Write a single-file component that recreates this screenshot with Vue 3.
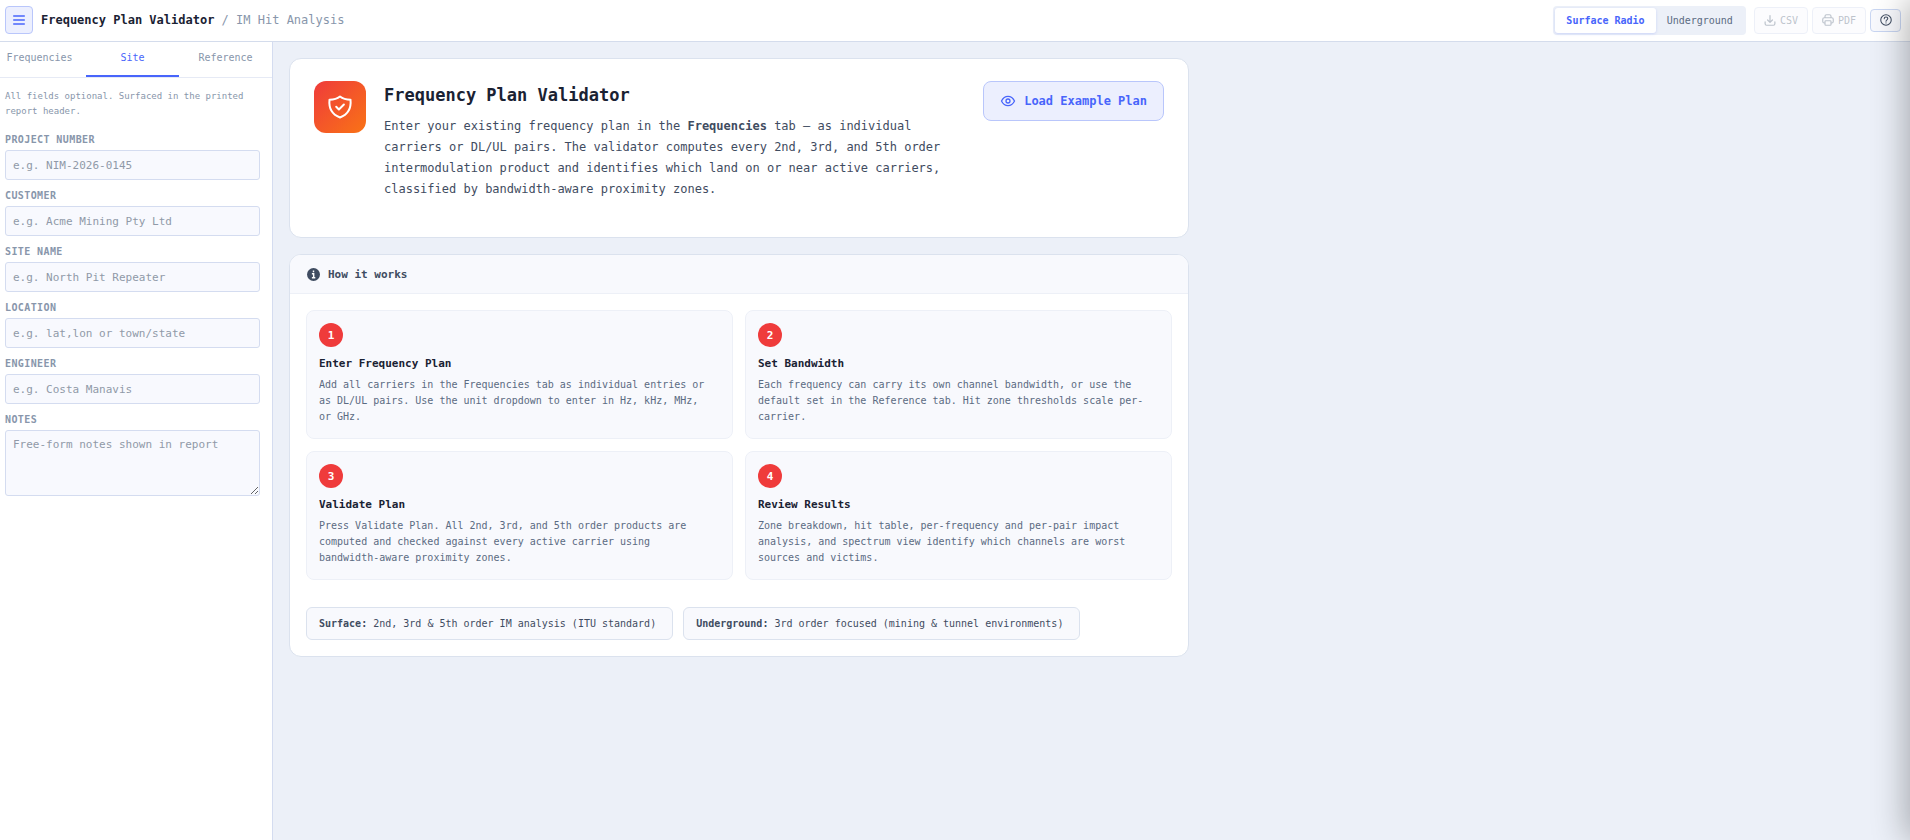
<template>
  <div class="app">
    <header class="topbar">
      <button class="menu-btn" type="button" aria-label="Toggle sidebar" @click="sidebarOpen = !sidebarOpen">
        <svg width="14" height="14" viewBox="0 0 14 14" fill="none" stroke="currentColor" stroke-width="1.6">
          <path d="M1.200 3h11.600M1.200 7h11.600M1.200 11h11.600" />
        </svg>
      </button>
      <div class="brand"><strong>Frequency Plan Validator</strong> / IM Hit Analysis</div>

      <div class="actions">
        <div class="mode-toggle">
          <button
            v-for="m in modes"
            :key="m"
            type="button"
            :class="{ active: mode === m }"
            @click="mode = m"
          >{{ m }}</button>
        </div>
        <div class="exports">
          <button class="export-btn" type="button" disabled>
            <svg width="12" height="12" viewBox="0 0 16 16" fill="none" stroke="currentColor" stroke-width="1.6" stroke-linecap="round" stroke-linejoin="round">
              <path d="M1.500 10.500v2.500a2 2 0 0 0 2 2h9a2 2 0 0 0 2-2v-2.500M8 2v9M4.800 8L8 11.200 11.200 8" />
            </svg>
            CSV
          </button>
          <button class="export-btn" type="button" disabled>
            <svg width="12" height="12" viewBox="0 0 16 16" fill="none" stroke="currentColor" stroke-width="1.5" stroke-linejoin="round">
              <path d="M4 5V3a2 2 0 0 1 2-2h4a2 2 0 0 1 2 2v2M4 12H3a2 2 0 0 1-2-2V7a2 2 0 0 1 2-2h10a2 2 0 0 1 2 2v3a2 2 0 0 1-2 2h-1" />
              <rect x="4" y="9" width="8" height="6" rx="1" />
            </svg>
            PDF
          </button>
          <button class="help-btn" type="button" aria-label="Help" @click="helpOpen = !helpOpen">
            <svg width="12" height="12" viewBox="0 0 16 16" fill="none" stroke="currentColor" stroke-width="1.4" stroke-linecap="round">
              <circle cx="8" cy="8" r="7" />
              <path d="M5.600 6.200C5.600 4.700 6.700 4 8 4s2.400.8 2.400 2.100C10.400 7.700 8 7.800 8 9.600M8 11.800v.2" />
            </svg>
          </button>
        </div>
      </div>
    </header>

    <div class="layout">
      <aside v-show="sidebarOpen" class="sidebar">
        <nav class="tabs">
          <button
            v-for="t in tabs"
            :key="t"
            type="button"
            :class="{ active: tab === t }"
            @click="tab = t"
          >{{ t }}</button>
        </nav>
        <form class="site-form" @submit.prevent>
          <p class="hint">All fields optional. Surfaced in the printed report header.</p>
          <div v-for="f in fields" :key="f.id" class="field">
            <label :for="f.id">{{ f.label }}</label>
            <input :id="f.id" v-model="site[f.id]" type="text" :placeholder="f.placeholder" />
          </div>
          <div class="field">
            <label for="notes">Notes</label>
            <textarea id="notes" v-model="site.notes" placeholder="Free-form notes shown in report"></textarea>
          </div>
        </form>
      </aside>

      <main class="content">
        <section class="card hero">
          <div class="hero-icon">
            <svg width="26" height="26" viewBox="0 0 26 26" fill="none" stroke="#fff" stroke-width="2" stroke-linecap="round" stroke-linejoin="round">
              <path d="M13 2.500c2.800 2.300 6 3.200 10.500 3.200.8 7.800-2 14.600-10.500 17.800C4.500 20.300 1.700 13.500 2.500 5.700 7 5.700 10.200 4.800 13 2.500z" />
              <path d="M9.200 12.800l2.700 2.700 5-5" />
            </svg>
          </div>
          <div class="hero-text">
            <h1>Frequency Plan Validator</h1>
            <p>
              Enter your existing frequency plan in the <strong>Frequencies</strong> tab — as individual
              carriers or DL/UL pairs. The validator computes every 2nd, 3rd, and 5th order intermodulation
              product and identifies which land on or near active carriers, classified by
              bandwidth-aware proximity zones.
            </p>
          </div>
          <button class="example-btn" type="button">
            <svg width="16" height="16" viewBox="0 0 16 16" fill="none" stroke="currentColor" stroke-width="1.3">
              <path d="M1.500 8C3 4.900 5.200 3.300 8 3.300S13 4.900 14.500 8C13 11.100 10.800 12.700 8 12.700S3 11.100 1.500 8z" />
              <circle cx="8" cy="8" r="2" />
            </svg>
            Load Example Plan
          </button>
        </section>

        <section class="card how">
          <h2>
            <svg width="13" height="13" viewBox="0 0 16 16">
              <circle cx="8" cy="8" r="8" fill="currentColor" />
              <path d="M8 3.200v2M6 7h2.200v5M6 12h4.200" fill="none" stroke="#fff" stroke-width="1.800" />
            </svg>
            How it works
          </h2>
          <div class="how-body">
            <div class="steps">
              <article v-for="(s, i) in steps" :key="s.title" class="step">
                <span class="num">{{ i + 1 }}</span>
                <h3>{{ s.title }}</h3>
                <p>
                  <template v-for="(part, k) in s.text" :key="k">
                    <span :class="{ nowrap: k % 2 === 1 }">{{ part }}</span>
                  </template>
                </p>
              </article>
            </div>
            <div class="notes">
              <div><strong>Surface:</strong> 2nd, 3rd &amp; 5th order IM analysis (ITU standard)</div>
              <div><strong>Underground:</strong> 3rd order focused (mining &amp; tunnel environments)</div>
            </div>
          </div>
        </section>
      </main>
    </div>

    <aside class="drawer" :class="{ open: helpOpen }" :aria-hidden="!helpOpen"></aside>
  </div>
</template>

<script setup>
import { ref, reactive } from 'vue'

const sidebarOpen = ref(true)
const helpOpen = ref(false)

const modes = ['Surface Radio', 'Underground']
const mode = ref('Surface Radio')

const tabs = ['Frequencies', 'Site', 'Reference']
const tab = ref('Site')

const site = reactive({ project: '', customer: '', siteName: '', location: '', engineer: '', notes: '' })

const fields = [
  { id: 'project', label: 'Project Number', placeholder: 'e.g. NIM-2026-0145' },
  { id: 'customer', label: 'Customer', placeholder: 'e.g. Acme Mining Pty Ltd' },
  { id: 'siteName', label: 'Site Name', placeholder: 'e.g. North Pit Repeater' },
  { id: 'location', label: 'Location', placeholder: 'e.g. lat,lon or town/state' },
  { id: 'engineer', label: 'Engineer', placeholder: 'e.g. Costa Manavis' }
]

// odd parts of text are kept on one line
const steps = [
  {
    title: 'Enter Frequency Plan',
    text: [
      'Add all carriers in the Frequencies tab as individual entries or as DL/UL pairs. Use the unit dropdown to enter in Hz, kHz, MHz, ',
      'or GHz.'
    ]
  },
  {
    title: 'Set Bandwidth',
    text: ['Each frequency can carry its own channel bandwidth, or use the default set in the Reference tab. Hit zone thresholds scale per-carrier.']
  },
  {
    title: 'Validate Plan',
    text: [
      'Press Validate Plan. All 2nd, 3rd, and 5th order products are computed and checked against every active carrier using ',
      'bandwidth-aware',
      ' proximity zones.'
    ]
  },
  {
    title: 'Review Results',
    text: ['Zone breakdown, hit table, per-frequency and per-pair impact analysis, and spectrum view identify which channels are worst sources and victims.']
  }
]
</script>

<style>
body {
  margin: 0;
  background: #ecf0f8;
}
</style>

<style scoped>
* {
  box-sizing: border-box;
}

.app {
  display: flex;
  flex-direction: column;
  min-height: 100vh;
  margin-left: -7px;
  color: #1a2233;
  font-family: "DejaVu Sans Mono", monospace;
}

button,
input,
textarea {
  font-family: inherit;
  margin: 0;
}

button {
  cursor: pointer;
}

svg {
  flex-shrink: 0;
}

.topbar {
  display: flex;
  align-items: center;
  gap: 8px;
  height: 42px;
  padding: 0 9px 1px 12px;
  background: #fff;
  border-bottom: 1px solid #d4dcec;
}

.menu-btn {
  display: flex;
  align-items: center;
  justify-content: center;
  width: 28px;
  height: 28px;
  padding: 0;
  color: #4865fb;
  background: #eceffe;
  border: 1px solid #b9c6fb;
  border-radius: 4px;
}

.brand {
  font-size: 12px;
  color: #8896ab;
}

.brand strong {
  color: #1a2233;
}

.actions {
  display: flex;
  align-items: center;
  gap: 8px;
  margin-left: auto;
}

.mode-toggle {
  display: flex;
  padding: 2px;
  background: #ecf0f8;
  border-radius: 4px;
}

.mode-toggle button {
  height: 25px;
  padding: 0 11px;
  font-size: 10px;
  color: #5b6b82;
  background: transparent;
  border: none;
  border-radius: 3px;
}

.mode-toggle button.active {
  font-weight: 700;
  color: #4865fb;
  background: #fff;
  box-shadow: 0 1px 3px rgba(72, 101, 251, 0.2);
}

.exports {
  display: flex;
  align-items: center;
  gap: 4px;
}

.export-btn {
  display: flex;
  align-items: center;
  gap: 4px;
  height: 27px;
  padding: 0 9px;
  font-size: 10px;
  color: #5b6b82;
  background: #f8f9fd;
  border: 1px solid #d4dcf0;
  border-radius: 4px;
  opacity: 0.4;
  cursor: not-allowed;
}

.help-btn {
  display: flex;
  align-items: center;
  justify-content: center;
  width: 31px;
  height: 23px;
  padding: 0;
  color: #3f4c61;
  background: #f8f9fd;
  border: 1px solid #c9d6f2;
  border-radius: 4px;
}

.layout {
  display: flex;
  flex: 1;
}

.sidebar {
  flex: 0 0 280px;
  background: #fff;
  border-right: 1px solid #d4dcf0;
}

.tabs {
  display: flex;
  border-bottom: 1px solid #e6eaf5;
}

.tabs button {
  flex: 1;
  height: 35px;
  padding: 0 0 2px;
  font-size: 10px;
  color: #8896ab;
  background: none;
  border: none;
  border-bottom: 2px solid transparent;
}

.tabs button.active {
  color: #4865fb;
  border-bottom-color: #4865fb;
}

.site-form {
  padding: 11px 12px;
}

.hint {
  margin: 0 0 15px;
  font-size: 9px;
  line-height: 15px;
  color: #8896ab;
}

.field {
  display: flex;
  flex-direction: column;
  gap: 4px;
  margin-bottom: 10px;
}

.field label {
  font-size: 10px;
  line-height: 12px;
  font-weight: 700;
  letter-spacing: 0.04em;
  text-transform: uppercase;
  color: #8896ab;
}

.field input,
.field textarea {
  width: 100%;
  padding: 0 7px;
  font-size: 11px;
  color: #1a2233;
  background: #f8f9fe;
  border: 1px solid #d4dcf0;
  border-radius: 3px;
  outline: none;
}

.field input {
  height: 30px;
}

.field textarea {
  display: block;
  height: 66px;
  padding: 7px;
  resize: vertical;
}

.field input::placeholder,
.field textarea::placeholder {
  color: #9099a8;
}

.field input:focus,
.field textarea:focus {
  border-color: #4865fb;
}

.content {
  flex: 1;
  min-width: 0;
  padding: 16px;
}

.card {
  max-width: 900px;
  margin-bottom: 16px;
  background: #fff;
  border: 1px solid #dbe2ee;
  border-radius: 12px;
  overflow: hidden;
}

.hero {
  display: flex;
  align-items: flex-start;
  gap: 18px;
  padding: 22px 24px;
}

.hero-icon {
  display: flex;
  align-items: center;
  justify-content: center;
  flex: 0 0 52px;
  height: 52px;
  background: linear-gradient(135deg, #ef3b3b, #f97316);
  border-radius: 12px;
}

.hero-text {
  flex: 1;
}

.hero-text h1 {
  margin: 0 0 7px;
  font-size: 17px;
  line-height: 28px;
}

.hero-text p {
  margin: 0 0 15px;
  font-size: 12px;
  line-height: 21px;
  color: #3f4c61;
}

.example-btn {
  display: flex;
  align-items: center;
  gap: 8px;
  height: 40px;
  padding: 0 16px;
  font-size: 12px;
  font-weight: 700;
  color: #4865fb;
  background: #eceffe;
  border: 1px solid #b9c6fb;
  border-radius: 8px;
}

.how h2 {
  display: flex;
  align-items: center;
  gap: 8px;
  height: 39px;
  margin: 0;
  padding: 0 17px;
  font-size: 11px;
  color: #3f4c61;
  background: #f8f9fd;
  border-bottom: 1px solid #edf0f7;
}

.how-body {
  padding: 16px;
}

.steps {
  display: grid;
  grid-template-columns: 1fr 1fr;
  gap: 12px;
}

.step {
  padding: 12px 12px 13px;
  background: #f8f9fd;
  border: 1px solid #edf0f7;
  border-radius: 8px;
}

.num {
  display: flex;
  align-items: center;
  justify-content: center;
  width: 24px;
  height: 24px;
  margin-bottom: 8px;
  font-size: 11px;
  font-weight: 700;
  color: #fff;
  background: #ef3b3b;
  border-radius: 50%;
}

.step h3 {
  margin: 0 0 5px;
  font-size: 11px;
  line-height: 17px;
}

.step p {
  margin: 0;
  font-size: 10px;
  line-height: 16px;
  color: #5b6b82;
}

.nowrap {
  white-space: nowrap;
}

.notes {
  display: flex;
  flex-wrap: wrap;
  gap: 10px;
  margin-top: 27px;
}

.notes div {
  padding: 8px 16px 8px 12px;
  font-size: 10px;
  line-height: 15px;
  color: #3f4c61;
  background: #f8f9fd;
  border: 1px solid #dbe2ee;
  border-radius: 6px;
}

/* help drawer is parked past the right edge, only its shadow shows */
.drawer {
  position: fixed;
  top: 0;
  right: 0;
  bottom: 0;
  width: 420px;
  background: #fff;
  box-shadow: -4px 0 32px rgba(0, 0, 0, 0.3);
  transform: translateX(100%);
  transition: transform 0.25s ease;
}

.drawer.open {
  transform: none;
}
</style>
